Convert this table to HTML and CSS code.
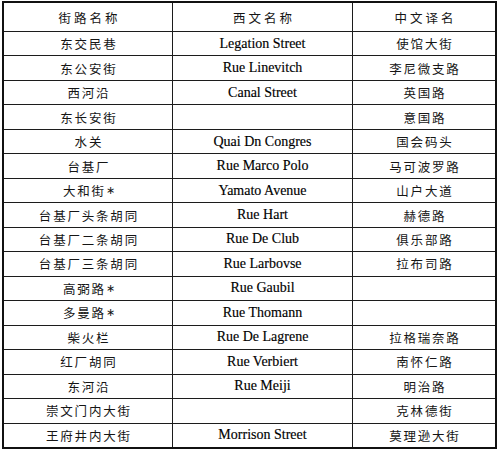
FILE: index.html
```html
<!DOCTYPE html>
<html lang="zh">
<head>
<meta charset="utf-8">
<link rel="stylesheet" href="styles.css">
</head>
<body>
<div class="sheet">
  <div class="street-table">
    <div class="cell zh head">街路名称</div>
    <div class="cell zh head">西文名称</div>
    <div class="cell zh head">中文译名</div>

    <div class="cell zh">东交民巷</div><div class="cell en">Legation Street</div><div class="cell zh">使馆大街</div>
    <div class="cell zh">东公安街</div><div class="cell en">Rue Linevitch</div><div class="cell zh">李尼微支路</div>
    <div class="cell zh">西河沿</div><div class="cell en">Canal Street</div><div class="cell zh">英国路</div>
    <div class="cell zh">东长安街</div><div class="cell en"></div><div class="cell zh">意国路</div>
    <div class="cell zh">水关</div><div class="cell en">Quai Dn Congres</div><div class="cell zh">国会码头</div>
    <div class="cell zh">台基厂</div><div class="cell en">Rue Marco Polo</div><div class="cell zh">马可波罗路</div>
    <div class="cell zh">大和街 <span class="star">∗</span></div><div class="cell en">Yamato Avenue</div><div class="cell zh">山户大道</div>
    <div class="cell zh">台基厂头条胡同</div><div class="cell en">Rue Hart</div><div class="cell zh">赫德路</div>
    <div class="cell zh">台基厂二条胡同</div><div class="cell en">Rue De Club</div><div class="cell zh">俱乐部路</div>
    <div class="cell zh">台基厂三条胡同</div><div class="cell en">Rue Larbovse</div><div class="cell zh">拉布司路</div>
    <div class="cell zh">高弼路 <span class="star">∗</span></div><div class="cell en">Rue Gaubil</div><div class="cell zh"></div>
    <div class="cell zh">多曼路 <span class="star">∗</span></div><div class="cell en">Rue Thomann</div><div class="cell zh"></div>
    <div class="cell zh">柴火栏</div><div class="cell en">Rue De Lagrene</div><div class="cell zh">拉格瑞奈路</div>
    <div class="cell zh">红厂胡同</div><div class="cell en">Rue Verbiert</div><div class="cell zh">南怀仁路</div>
    <div class="cell zh">东河沿</div><div class="cell en">Rue Meiji</div><div class="cell zh">明治路</div>
    <div class="cell zh">崇文门内大街</div><div class="cell en"></div><div class="cell zh">克林德街</div>
    <div class="cell zh">王府井内大街</div><div class="cell en">Morrison Street</div><div class="cell zh">莫理逊大街</div>
  </div>
</div>
</body>
</html>
```

FILE: styles.css
```css
html, body {
  margin: 0;
  padding: 0;
  background: #ffffff;
}

.sheet {
  padding: 1px 3px 0 2px;
}

.street-table {
  width: 495px;
  height: 448px;
  box-sizing: border-box;
  border: 2px solid #111111;
  background: #1c1c1c;
  display: grid;
  grid-template-columns: 168px 179px 142px;
  grid-template-rows: 28px repeat(17, 1fr);
  gap: 1px;
}

.cell {
  background: #ffffff;
  display: flex;
  align-items: center;
  justify-content: center;
  color: #151515;
  white-space: nowrap;
}

.zh {
  font-family: "Noto Sans CJK SC", sans-serif;
  font-size: 12.5px;
  letter-spacing: 1.8px;
  padding-left: 1.8px;
}

.head {
  letter-spacing: 3px;
  padding-left: 3px;
}

.en {
  font-family: "Liberation Serif", serif;
  font-size: 14px;
  color: #000000;
  -webkit-text-stroke: 0.15px #000000;
}

.star {
  font-family: "Liberation Serif", serif;
  font-size: 11px;
  letter-spacing: 0;
}
```
